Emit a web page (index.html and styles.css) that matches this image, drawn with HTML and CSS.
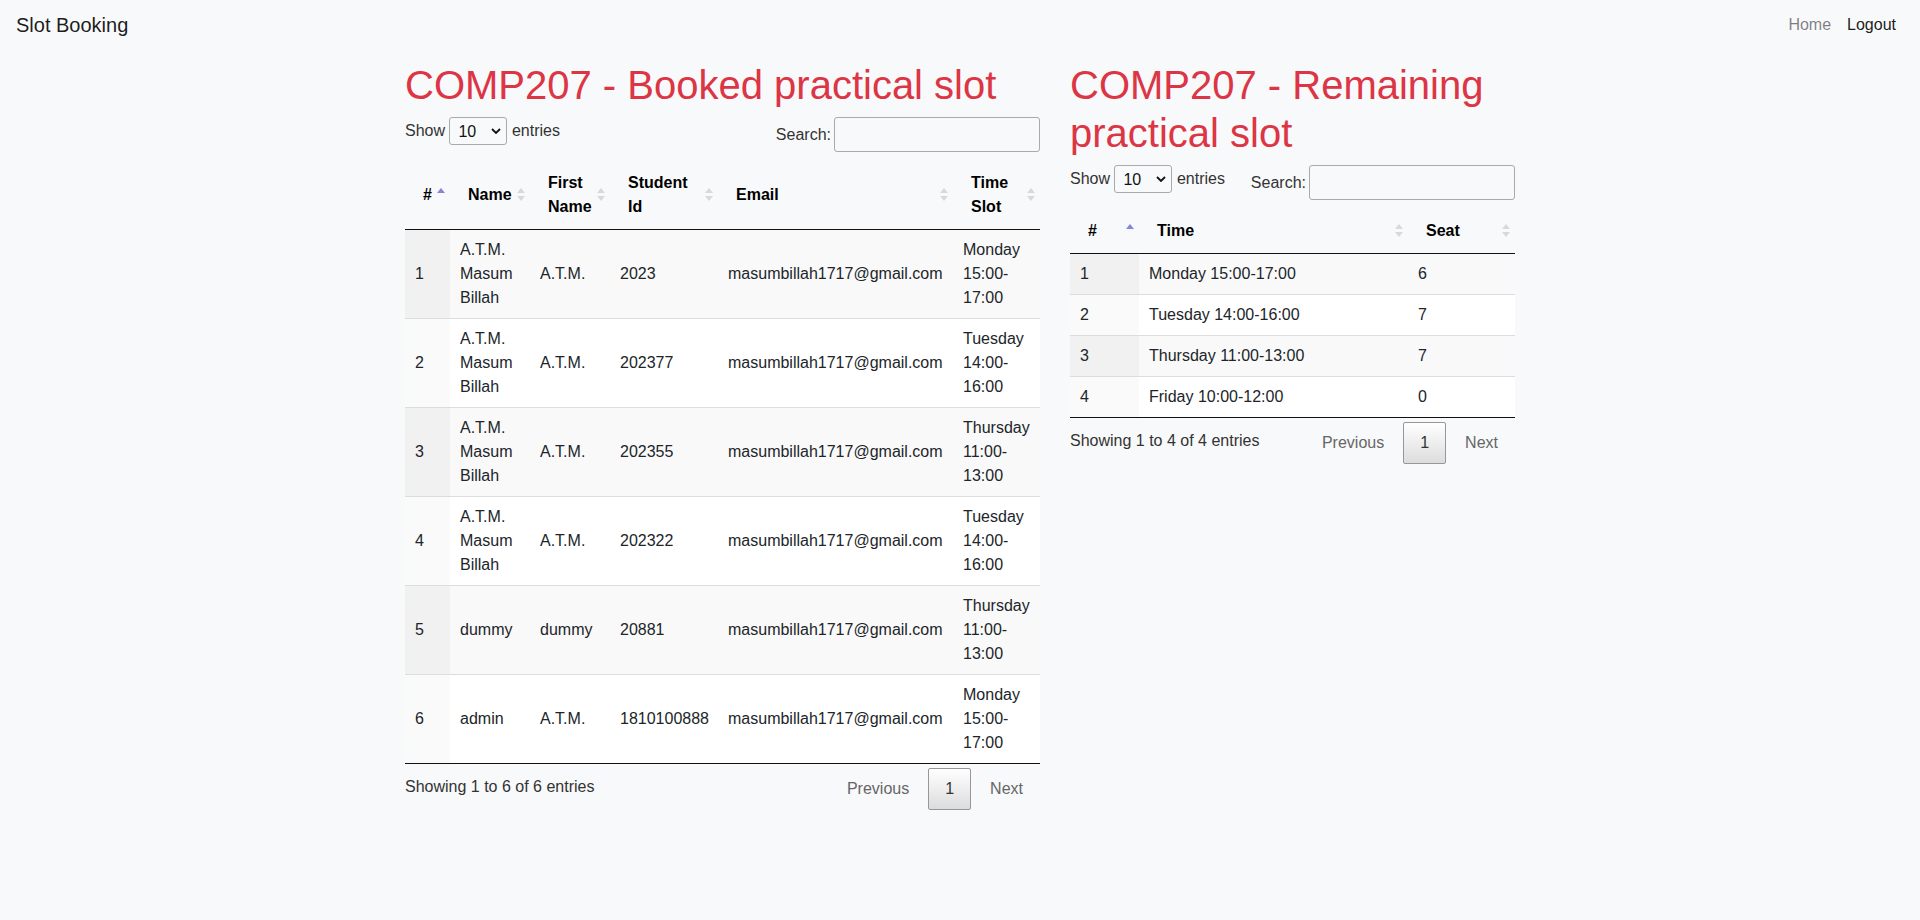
FILE: index.html
```html
<!DOCTYPE html>
<html lang="en">
<head>
<meta charset="utf-8">
<title>Slot Booking</title>
<link rel="stylesheet" href="styles.css">
</head>
<body>
<nav class="navbar">
  <a class="brand" href="#">Slot Booking</a>
  <ul class="nav">
    <li><a class="nav-link" href="#">Home</a></li>
    <li><a class="nav-link active" href="#">Logout</a></li>
  </ul>
</nav>

<main class="container">
  <div class="row">
    <section class="col col-wide">
      <h1 class="title">COMP207 - Booked practical slot</h1>
      <div class="dt-controls">
        <label class="dt-length">
          <span>Show</span>
          <span class="select-wrap">
            <select class="dt-select"><option>10</option><option>25</option><option>50</option><option>100</option></select>
            <svg class="chevron" width="10" height="6" viewBox="0 0 10 6"><path d="M1 1 L5 5 L9 1" fill="none" stroke="#111" stroke-width="1.8"/></svg>
          </span>
          <span>entries</span>
        </label>
        <label class="dt-filter">
          <span>Search:</span>
          <input class="dt-input" type="search">
        </label>
      </div>
      <table class="dt-table">
        <thead>
          <tr>
            <th class="w-num sort-asc">#</th>
            <th class="w-name sort-both">Name</th>
            <th class="w-first sort-both">First Name</th>
            <th class="w-sid sort-both">Student Id</th>
            <th class="w-email sort-both">Email</th>
            <th class="w-slot sort-both">Time Slot</th>
          </tr>
        </thead>
        <tbody>
          <tr><td class="sorted">1</td><td>A.T.M. Masum Billah</td><td>A.T.M.</td><td>2023</td><td>masumbillah1717@gmail.com</td><td>Monday 15:00-17:00</td></tr>
          <tr><td class="sorted">2</td><td>A.T.M. Masum Billah</td><td>A.T.M.</td><td>202377</td><td>masumbillah1717@gmail.com</td><td>Tuesday 14:00-16:00</td></tr>
          <tr><td class="sorted">3</td><td>A.T.M. Masum Billah</td><td>A.T.M.</td><td>202355</td><td>masumbillah1717@gmail.com</td><td>Thursday 11:00-13:00</td></tr>
          <tr><td class="sorted">4</td><td>A.T.M. Masum Billah</td><td>A.T.M.</td><td>202322</td><td>masumbillah1717@gmail.com</td><td>Tuesday 14:00-16:00</td></tr>
          <tr><td class="sorted">5</td><td>dummy</td><td>dummy</td><td>20881</td><td>masumbillah1717@gmail.com</td><td>Thursday 11:00-13:00</td></tr>
          <tr><td class="sorted">6</td><td>admin</td><td>A.T.M.</td><td>1810100888</td><td>masumbillah1717@gmail.com</td><td>Monday 15:00-17:00</td></tr>
        </tbody>
      </table>
      <div class="dt-footer">
        <div class="dt-info">Showing 1 to 6 of 6 entries</div>
        <div class="dt-paginate">
          <a class="page-btn disabled">Previous</a><a class="page-btn current">1</a><a class="page-btn disabled">Next</a>
        </div>
      </div>
    </section>

    <section class="col col-narrow">
      <h1 class="title">COMP207 - Remaining practical slot</h1>
      <div class="dt-controls">
        <label class="dt-length">
          <span>Show</span>
          <span class="select-wrap">
            <select class="dt-select"><option>10</option><option>25</option><option>50</option><option>100</option></select>
            <svg class="chevron" width="10" height="6" viewBox="0 0 10 6"><path d="M1 1 L5 5 L9 1" fill="none" stroke="#111" stroke-width="1.8"/></svg>
          </span>
          <span>entries</span>
        </label>
        <label class="dt-filter">
          <span>Search:</span>
          <input class="dt-input" type="search">
        </label>
      </div>
      <table class="dt-table">
        <thead>
          <tr>
            <th class="w-rnum sort-asc">#</th>
            <th class="w-time sort-both">Time</th>
            <th class="w-seat sort-both">Seat</th>
          </tr>
        </thead>
        <tbody>
          <tr><td class="sorted">1</td><td>Monday 15:00-17:00</td><td>6</td></tr>
          <tr><td class="sorted">2</td><td>Tuesday 14:00-16:00</td><td>7</td></tr>
          <tr><td class="sorted">3</td><td>Thursday 11:00-13:00</td><td>7</td></tr>
          <tr><td class="sorted">4</td><td>Friday 10:00-12:00</td><td>0</td></tr>
        </tbody>
      </table>
      <div class="dt-footer">
        <div class="dt-info">Showing 1 to 4 of 4 entries</div>
        <div class="dt-paginate">
          <a class="page-btn disabled">Previous</a><a class="page-btn current">1</a><a class="page-btn disabled">Next</a>
        </div>
      </div>
    </section>
  </div>
</main>
</body>
</html>
```

FILE: styles.css
```css
* { box-sizing: border-box; }

html, body {
  margin: 0;
  padding: 0;
}

body {
  background: #f8f9fa;
  color: #212529;
  font-family: "Liberation Sans", Arial, sans-serif;
  font-size: 16px;
  line-height: 24px;
}

a { text-decoration: none; }

/* Navbar */
.navbar {
  display: flex;
  justify-content: space-between;
  align-items: flex-start;
  padding: 5px 16px;
  height: 50px;
}

.brand {
  font-size: 20px;
  line-height: 30px;
  padding: 5px 0;
  color: rgba(0, 0, 0, 0.9);
}

.nav {
  display: flex;
  list-style: none;
  margin: 0;
  padding: 0;
}

.nav-link {
  display: block;
  padding: 8px 8px;
  color: rgba(0, 0, 0, 0.5);
}

.nav-link.active { color: rgba(0, 0, 0, 0.9); }

/* Layout */
.container {
  width: 1110px;
  margin: 0 auto;
  padding-top: 11px;
}

.row {
  display: flex;
  gap: 30px;
  align-items: flex-start;
}

.col-wide { width: 635px; }
.col-narrow { width: 445px; }

.title {
  margin: 0 0 8px;
  font-size: 40px;
  line-height: 48px;
  font-weight: 400;
  color: #dc3545;
}

/* DataTables controls */
.dt-controls {
  display: flex;
  justify-content: space-between;
  align-items: flex-start;
  height: 38px;
  color: #333;
}

.dt-length {
  display: flex;
  align-items: center;
  gap: 4.45px;
}

.select-wrap {
  position: relative;
  display: block;
  width: 58px;
  height: 28px;
}

.dt-select {
  appearance: none;
  -webkit-appearance: none;
  display: block;
  width: 58px;
  height: 28px;
  margin: 0;
  padding: 0 0 0 8px;
  border: 1px solid #aaa;
  border-radius: 3px;
  background: transparent;
  font-family: inherit;
  font-size: 16px;
  color: #111;
}

.chevron {
  position: absolute;
  right: 6px;
  top: 11px;
  pointer-events: none;
}

.dt-filter {
  display: flex;
  align-items: center;
}

.dt-input {
  width: 206px;
  height: 35px;
  margin: 0 0 0 3px;
  padding: 5px;
  border: 1px solid #aaa;
  border-radius: 3px;
  background: transparent;
  font-family: inherit;
  font-size: 16px;
}

/* Table */
.dt-table {
  width: 100%;
  table-layout: fixed;
  border-collapse: separate;
  border-spacing: 0;
  margin-top: 6px;
  border-bottom: 1px solid #111;
}

.dt-table th {
  position: relative;
  padding: 10px 18px;
  font-weight: bold;
  text-align: left;
  vertical-align: middle;
  border-bottom: 1px solid #111;
  color: #000;
}

.dt-table td {
  padding: 8px 10px;
  vertical-align: middle;
  border-top: 1px solid #ddd;
}

.dt-table tbody tr:first-child td { border-top: none; }

.dt-table tbody tr:nth-child(odd) { background: #f9f9f9; }
.dt-table tbody tr:nth-child(even) { background: #fff; }
.dt-table tbody tr:nth-child(odd) td.sorted { background: #f1f1f1; }
.dt-table tbody tr:nth-child(even) td.sorted { background: #fafafa; }

.w-num { width: 45px; }
.w-name { width: 80px; }
.w-first { width: 80px; }
.w-sid { width: 108px; }
.w-email { width: 235px; }
.w-slot { width: 87px; }

.w-rnum { width: 69px; }
.w-time { width: 269px; }
.w-seat { width: 107px; }

/* Sort indicators */
.sort-both::before,
.sort-both::after,
.sort-asc::before {
  content: "";
  position: absolute;
  right: 5px;
  top: 50%;
  width: 0;
  height: 0;
  border-left: 4px solid transparent;
  border-right: 4px solid transparent;
}

.sort-both::before {
  margin-top: -7px;
  border-bottom: 5px solid #d9d9d9;
}

.sort-both::after {
  margin-top: 1px;
  border-top: 5px solid #d9d9d9;
}

.sort-asc::before {
  margin-top: -7px;
  border-bottom: 5px solid #8585d9;
}

/* Footer: info + pagination */
.dt-footer {
  display: flex;
  justify-content: space-between;
  align-items: flex-start;
  color: #333;
}

.dt-info {
  padding-top: 11px;
}

.dt-paginate {
  display: flex;
  padding-top: 4px;
}

.page-btn {
  display: inline-block;
  min-width: 24px;
  padding: 8px 16px;
  margin-left: 2px;
  text-align: center;
  border: 1px solid transparent;
  border-radius: 2px;
  color: #333;
  cursor: pointer;
}

.page-btn.disabled {
  color: #666;
  cursor: default;
}

.page-btn.current {
  color: #333;
  border: 1px solid #979797;
  background: linear-gradient(to bottom, #fff 0%, #dcdcdc 100%);
}
```
